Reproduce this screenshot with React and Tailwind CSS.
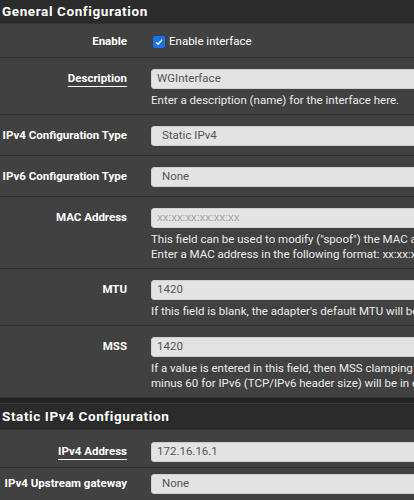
import React from 'react';

const font = { fontFamily: 'Roboto, "Liberation Sans", sans-serif' };

function SectionHeader({ title, tall }) {
  return (
    <div className={'bg-[#2b2b2b] px-[2px] flex items-center ' + (tall ? 'h-[25px]' : 'h-[23px]')}>
      <h2 className="text-[13.5px] font-bold tracking-[0.6px] text-white leading-none whitespace-nowrap">
        {title}
      </h2>
    </div>
  );
}

function Row({ label, underline, compact, pad = 'pt-[11px] pb-[6px]', children }) {
  return (
    <div className={'flex border-t border-[#333333] bg-[#414141] ' + pad}>
      <div
        className={
          'w-[128px] shrink-0 flex justify-end items-center pr-[1px] ' + (compact ? 'h-[14px]' : 'h-[20px]')
        }
      >
        <span
          className={
            'text-[11.5px] font-bold text-white whitespace-nowrap leading-none ' +
            (underline ? 'underline underline-offset-[4px] decoration-1' : '')
          }
        >
          {label}
        </span>
      </div>
      <div className="ml-[23px] w-[420px] shrink-0">{children}</div>
    </div>
  );
}

function TextInput({ value, placeholder }) {
  return (
    <div className="h-[20px] rounded-[3px] bg-[#e3e3e3] border border-[#cfcfcf] flex items-center pl-[5px]">
      {value ? (
        <span className="text-[11.5px] text-[#555555]">{value}</span>
      ) : (
        <span className="text-[11.5px] text-[#a8a8a8]">{placeholder}</span>
      )}
    </div>
  );
}

function Select({ value }) {
  return (
    <div className="h-[20px] rounded-[3px] bg-[#e3e3e3] border border-[#cfcfcf] flex items-center pl-[10px]">
      <span className="text-[11.5px] text-[#555555]">{value}</span>
    </div>
  );
}

function Help({ lines }) {
  return (
    <div className="mt-[4px] text-[11.5px] leading-[15px] text-[#ebebeb] whitespace-nowrap">
      {lines.map((l) => (
        <div key={l}>{l}</div>
      ))}
    </div>
  );
}

export default function App() {
  return (
    <div className="w-[414px] h-[500px] overflow-hidden bg-[#414141]" style={font}>
      <SectionHeader title="General Configuration" />

      <Row label="Enable" compact pad="pt-[11px] pb-[8px]">
        <label className="flex items-center h-[14px] gap-[4px]">
          <span className="ml-[2px] w-[12px] h-[12px] rounded-[2px] bg-[#1a73e8] flex items-center justify-center">
            <svg viewBox="0 0 12 12" className="w-[10px] h-[10px]">
              <path d="M2.5 6.2 L5 8.6 L9.6 3.4" fill="none" stroke="white" strokeWidth="1.8" />
            </svg>
          </span>
          <span className="text-[11.5px] text-white">Enable interface</span>
        </label>
      </Row>

      <Row label="Description" underline>
        <TextInput value="WGInterface" />
        <Help lines={['Enter a description (name) for the interface here.']} />
      </Row>

      <Row label="IPv4 Configuration Type" pad="pt-[11px] pb-[9px]">
        <Select value="Static IPv4" />
      </Row>

      <Row label="IPv6 Configuration Type" pad="pt-[11px] pb-[9px]">
        <Select value="None" />
      </Row>

      <Row label="MAC Address">
        <TextInput placeholder="xx:xx:xx:xx:xx:xx" />
        <Help
          lines={[
            'This field can be used to modify ("spoof") the MAC address of this interface.',
            'Enter a MAC address in the following format: xx:xx:xx:xx:xx:xx or leave blank.',
          ]}
        />
      </Row>

      <Row label="MTU">
        <TextInput value="1420" />
        <Help
          lines={[
            "If this field is blank, the adapter's default MTU will be used. This is typically 1500 bytes but can vary in some circumstances.",
          ]}
        />
      </Row>

      <Row label="MSS">
        <TextInput value="1420" />
        <Help
          lines={[
            'If a value is entered in this field, then MSS clamping for TCP connections to the value entered above minus 40 for IPv4 (TCP/IPv4 header size) and',
            'minus 60 for IPv6 (TCP/IPv6 header size) will be in effect.',
          ]}
        />
      </Row>

      <div className="h-[6px] bg-[#222222] border-t border-[#333333]" />
      <div className="border-t border-[#383838]">
        <SectionHeader title="Static IPv4 Configuration" tall />
      </div>

      <Row label="IPv4 Address" underline pad="pt-[12px] pb-[5px]">
        <TextInput value="172.16.16.1" />
      </Row>

      <Row label="IPv4 Upstream gateway" pad="pt-[6px] pb-[8px]">
        <Select value="None" />
      </Row>
    </div>
  );
}
